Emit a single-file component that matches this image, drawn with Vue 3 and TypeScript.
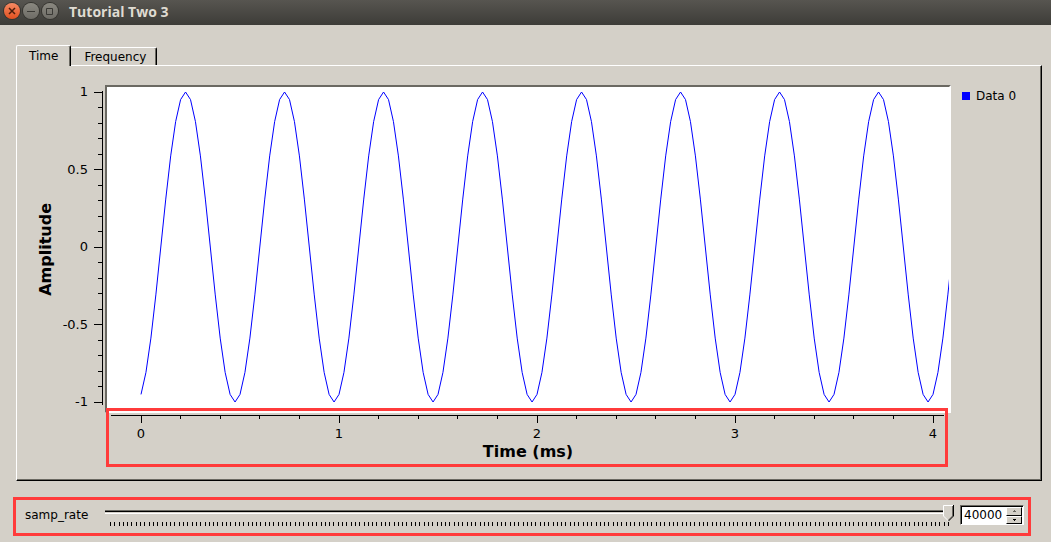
<script setup lang="ts">
import { computed, ref } from 'vue'

const tabs = ['Time', 'Frequency']
const activeTab = ref('Time')
const sampRate = ref(40000)

const PLOT_W = 846
const PLOT_H = 328
const X_ZERO = 36
const PX_PER_MS = 198
const Y_ZERO = 162
const PX_PER_UNIT = 155

const pct = (v: number, total: number) => `${(v / total) * 100}%`

const xTicks = Array.from({ length: 21 }, (_, i) => ({
  pos: pct(X_ZERO + i * 0.2 * PX_PER_MS, PLOT_W),
  label: i % 5 === 0 ? String(i / 5) : '',
}))

const yTicks = Array.from({ length: 21 }, (_, i) => ({
  pos: pct(Y_ZERO + (i / 10 - 1) * PX_PER_UNIT, PLOT_H),
  label: i % 5 === 0 ? String(1 - i / 10) : '',
}))

const wave = computed(() =>
  Array.from({ length: 165 }, (_, n) => {
    const x = X_ZERO + (n / 40) * PX_PER_MS
    const y = Y_ZERO - Math.cos((2 * Math.PI * (n - 9)) / 20) * PX_PER_UNIT
    return `${x.toFixed(2)},${y.toFixed(2)}`
  }).join(' '),
)

const sliderTicks = Array.from({ length: 196 }, (_, i) => pct(5.5 + i * 4.297, 849))

function step(delta: number) {
  sampRate.value = Math.min(40000, Math.max(1000, sampRate.value + delta))
}
</script>

<template>
  <div class="window">
    <header class="titlebar">
      <button class="wm close" aria-label="Close">
        <svg viewBox="0 0 16 16"><path d="M5 5l6 6M11 5l-6 6" /></svg>
      </button>
      <button class="wm" aria-label="Minimize">
        <svg viewBox="0 0 16 16"><path d="M4 8.5h8" /></svg>
      </button>
      <button class="wm" aria-label="Maximize">
        <svg viewBox="0 0 16 16"><path d="M4.5 5.5h6v6h-6z" /></svg>
      </button>
      <h1>Tutorial Two 3</h1>
    </header>

    <main>
      <div class="tabs" role="tablist">
        <button
          v-for="t in tabs"
          :key="t"
          role="tab"
          class="tab"
          :class="{ active: t === activeTab }"
          :aria-selected="t === activeTab"
          @click="activeTab = t"
        >{{ t }}</button>
      </div>

      <section class="panel">
        <div class="ylabel"><span>Amplitude</span></div>
        <svg class="yaxis">
          <line x1="45.5" x2="45.5" :y1="pct(6, PLOT_H)" :y2="pct(320, PLOT_H)" />
          <template v-for="t in yTicks" :key="t.pos">
            <line :x1="t.label ? 37 : 41" x2="46" :y1="t.pos" :y2="t.pos" />
            <text v-if="t.label" x="31" :y="t.pos" dy="4" text-anchor="end">{{ t.label }}</text>
          </template>
        </svg>
        <div class="canvas">
          <svg :viewBox="`2 2 ${PLOT_W - 4} ${PLOT_H - 4}`" preserveAspectRatio="none">
            <polyline :points="wave" />
          </svg>
        </div>
        <div class="legend"><i></i><span>Data 0</span></div>
        <div class="xaxis">
          <svg>
            <line :x1="pct(6, PLOT_W)" :x2="pct(839, PLOT_W)" y1="2.5" y2="2.5" />
            <template v-for="t in xTicks" :key="t.pos">
              <line :x1="t.pos" :x2="t.pos" y1="2" :y2="t.label ? 10 : 6" />
              <text v-if="t.label" :x="t.pos" y="25" text-anchor="middle">{{ t.label }}</text>
            </template>
          </svg>
          <strong>Time (ms)</strong>
          <div class="mark"></div>
        </div>
      </section>

      <section class="control">
        <label for="rate">samp_rate</label>
        <div class="slider">
          <input id="rate" v-model.number="sampRate" type="range" min="1000" max="40000" step="1000" />
          <svg>
            <line v-for="x in sliderTicks" :key="x" :x1="x" :x2="x" y1="0" y2="4" />
          </svg>
        </div>
        <div class="spin">
          <input v-model.number="sampRate" type="text" aria-label="samp_rate value" />
          <div class="steps">
            <button aria-label="Increase" class="off" @click="step(1000)">
              <svg viewBox="0 0 3 2"><path d="M1 0h1v1h1v1H0V1h1z" /></svg>
            </button>
            <button aria-label="Decrease" @click="step(-1000)">
              <svg viewBox="0 0 3 2"><path d="M0 0h3v1H2v1H1V1H0z" /></svg>
            </button>
          </div>
        </div>
      </section>
    </main>
  </div>
</template>

<style>
body {
  margin: 0;
  background: #d4d0c8;
}
</style>

<style scoped>
* {
  box-sizing: border-box;
}
.window {
  display: flex;
  flex-direction: column;
  min-height: 100vh;
  background: #d4d0c8;
  color: #000;
  font: 12px/16px "DejaVu Sans", sans-serif;
}
button,
input {
  margin: 0;
  padding: 0;
  border: 0;
  border-radius: 0;
  color: inherit;
  font: inherit;
}
svg {
  display: block;
}
.titlebar {
  display: flex;
  align-items: center;
  gap: 3px;
  height: 25px;
  padding: 0 4px 1px;
  background: linear-gradient(#575550, #3d3c38);
}
.wm {
  width: 16px;
  height: 16px;
  margin-bottom: 2px;
  border-radius: 50%;
  background: linear-gradient(#8a8880, #6e6c66);
  box-shadow: 0 0 0 1px #35342f;
}
.wm.close {
  background: linear-gradient(#f58a64, #e2501f);
}
.wm svg {
  width: 16px;
  height: 16px;
  fill: none;
  stroke: #3a3935;
}
.wm.close svg {
  stroke: #4a1d0c;
  stroke-width: 1.5;
}
h1 {
  margin: 0 0 0 8px;
  color: #dfdbd2;
  font: bold 14px/18px "Open Sans", "Noto Sans", sans-serif;
}
main {
  display: flex;
  flex: 1;
  flex-direction: column;
  padding: 20px 9px 6px 13px;
}
.tabs {
  display: flex;
  align-items: flex-end;
  height: 20px;
  padding-left: 3px;
}
.tab {
  height: 18px;
  padding: 0 10px 0 13px;
  background: #d4d0c8;
  border-top: 1px solid #fff;
  border-right: 1px solid #000;
  border-top-right-radius: 2px;
  box-shadow: inset -1px 0 #6b6962;
}
.tab.active {
  position: relative;
  z-index: 1;
  height: 21px;
  margin-bottom: -1px;
  padding: 0 12px;
  border-left: 1px solid #fff;
  border-top-left-radius: 2px;
}
.panel {
  display: grid;
  flex: 1;
  grid-template-columns: 40px 48px 1fr 90px;
  grid-template-rows: minmax(240px, 1fr) 67px;
  margin-left: 3px;
  padding-top: 19px;
  border: 1px solid #fff;
  border-right-color: #000;
  border-bottom-color: #000;
  box-shadow: inset -1px -1px #6b6962;
}
.ylabel {
  display: flex;
  align-items: center;
  justify-content: center;
  padding-left: 18px;
}
.ylabel span {
  writing-mode: vertical-rl;
  transform: rotate(180deg);
  font: bold 16px/20px "DejaVu Sans", sans-serif;
}
.yaxis {
  width: 100%;
  height: 100%;
  font-size: 13px;
}
.yaxis line,
.xaxis line,
.slider line {
  stroke: #000;
  shape-rendering: crispEdges;
}
.canvas {
  contain: size;
  background: #fff;
  border: 2px solid #fff;
  border-top-color: #6b6962;
  border-left-color: #6b6962;
}
.canvas svg {
  width: 100%;
  height: 100%;
}
.canvas polyline {
  fill: none;
  stroke: #00f;
  stroke-width: 1;
  vector-effect: non-scaling-stroke;
}
.legend {
  display: flex;
  align-items: center;
  align-self: start;
  gap: 6px;
  padding: 3px 0 0 11px;
}
.legend i {
  width: 8px;
  height: 8px;
  background: #00f;
}
.xaxis {
  position: relative;
  grid-column: 3;
  text-align: center;
}
.xaxis svg {
  width: 100%;
  height: 29px;
  font-size: 13px;
}
.xaxis strong {
  display: block;
  font-size: 16px;
  line-height: 20px;
}
.mark {
  position: absolute;
  inset: -5px 3px 13px 1px;
  border: 3px solid #ff3b3b;
}
.control {
  display: flex;
  align-items: flex-start;
  height: 39px;
  margin: 16px 11px 0 0;
  padding: 5px 4px 0 9px;
  border: 3px solid #ff3b3b;
}
.control label {
  width: 80px;
  line-height: 20px;
}
.slider {
  flex: 1;
  margin-right: 6px;
}
.slider input {
  display: block;
  width: 100%;
  height: 17px;
  appearance: none;
  background: linear-gradient(#6b6962 1px, #000 1px 2px, #d4d0c8 2px 3px, #fff 3px) 0 5px / 100% 4px no-repeat;
}
.slider input::-webkit-slider-thumb {
  width: 11px;
  height: 17px;
  appearance: none;
  background: url("data:image/svg+xml,%3Csvg xmlns='http://www.w3.org/2000/svg' width='11' height='17'%3E%3Cpath fill='%23d4d0c8' d='M0 0h11v11l-5 5h-1l-5-5z'/%3E%3Cpath fill='none' stroke='%23fff' d='M10 .5H.5v10.5l5 5'/%3E%3Cpath fill='none' stroke='%236b6962' d='M9.5 1v10l-4 4'/%3E%3Cpath fill='none' stroke='%23000' d='M10.5 0v11l-5 5'/%3E%3C/svg%3E");
}
.slider svg {
  width: 100%;
  height: 4px;
}
.spin {
  display: flex;
  width: 64px;
  height: 20px;
  background: #fff;
  border: 1px solid #fff;
  border-top-color: #6b6962;
  border-left-color: #6b6962;
  box-shadow: inset 1px 1px #000;
}
.spin input {
  width: 45px;
  padding-left: 3px;
  background: transparent;
}
.steps {
  display: flex;
  flex: 1;
  flex-direction: column;
  padding: 1px 1px 0 0;
}
.steps button {
  display: flex;
  flex: 1;
  align-items: center;
  justify-content: center;
  background: #d4d0c8;
  border: 1px solid #fff;
  border-right-color: #000;
  border-bottom-color: #000;
}
.steps svg {
  width: 3px;
  height: 2px;
}
.steps .off svg {
  fill: #6b6962;
}
</style>
